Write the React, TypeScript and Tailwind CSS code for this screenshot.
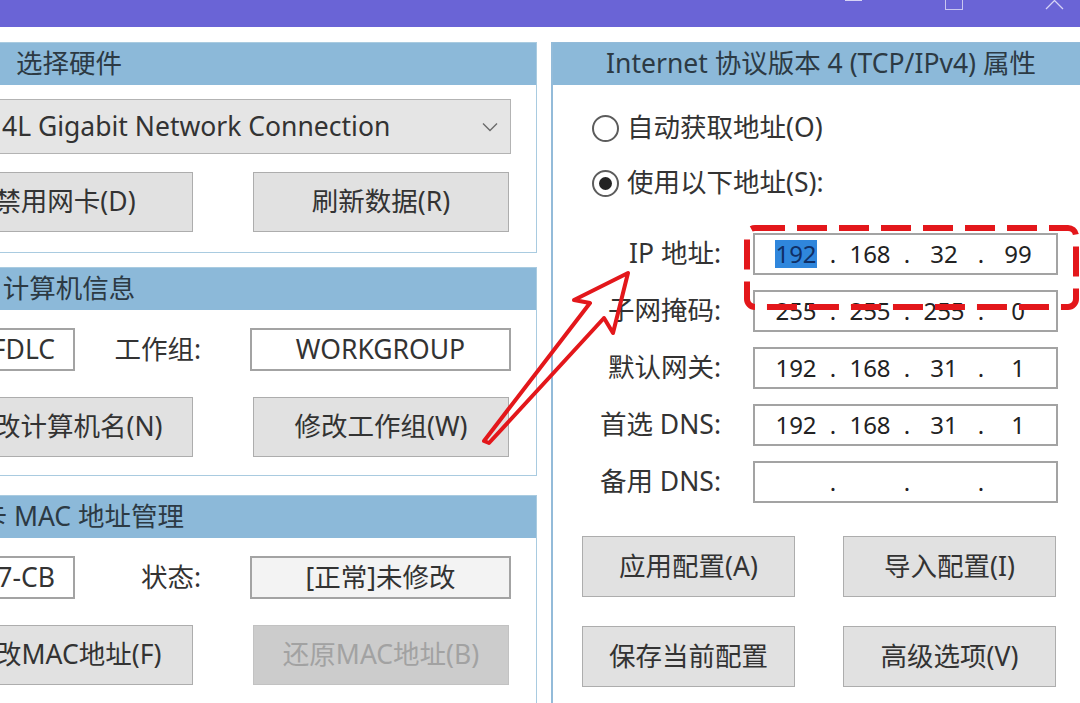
import React from "react";

type BtnProps = { children: React.ReactNode; className?: string; disabled?: boolean };

function Btn({ children, className = "", disabled = false }: BtnProps) {
  return (
    <div
      className={
        "shrink-0 flex items-center justify-center h-[60px] border text-[26.5px] whitespace-nowrap " +
        (disabled
          ? "bg-[#cccccc] border-[#c2c2c2] text-[#a2a2a2] "
          : "bg-[#e1e1e1] border-[#adadad] text-[#333333] ") +
        className
      }
    >
      {children}
    </div>
  );
}

function Header({ children }: { children: React.ReactNode }) {
  return (
    <div className="h-[42px] bg-[#8cb9d9] flex items-center justify-center text-[26.5px] text-[#2c3a44] whitespace-nowrap">
      {children}
    </div>
  );
}

function IpField({ parts, highlight = false }: { parts: string[]; highlight?: boolean }) {
  return (
    <div className="shrink-0 ml-[30px] w-[305px] h-[42px] border-2 border-[#a3a3a3] bg-white flex items-center pl-[12px] text-[24px] text-[#222222]">
      {parts.map((p, i) => (
        <React.Fragment key={i}>
          <div className="w-[58px] flex justify-center">
            {i === 0 && highlight ? (
              <span className="w-[42px] h-[28px] flex items-center justify-center bg-[#2f86dc] text-[#0f2f66]">{p}</span>
            ) : (
              <span>{p}</span>
            )}
          </div>
          {i < 3 && <div className="w-[16px] text-center">.</div>}
        </React.Fragment>
      ))}
    </div>
  );
}

function Radio({ checked, label }: { checked: boolean; label: string }) {
  return (
    <div className="h-[40px] flex items-center pl-[39px] gap-[8px] text-[26.5px] text-[#333333]">
      <div className="w-[27px] h-[27px] rounded-full border-2 border-[#5c5c5c] bg-white flex items-center justify-center">
        {checked && <div className="w-[13px] h-[13px] rounded-full bg-[#222222]" />}
      </div>
      <span>{label}</span>
    </div>
  );
}

function FieldRow({ label, parts, highlight }: { label: string; parts: string[]; highlight?: boolean }) {
  return (
    <div className="flex items-center h-[42px] mb-[15px]">
      <div className="shrink-0 w-[170px] text-right pr-[2px] text-[26.5px] text-[#333333] whitespace-nowrap">{label}</div>
      <IpField parts={parts} highlight={highlight} />
    </div>
  );
}

export default function App() {
  return (
    <div className="relative w-[1080px] h-[703px] overflow-hidden bg-white font-['Noto_Sans','Noto_Sans_CJK_SC',sans-serif]">
      {/* title bar */}
      <div className="h-[27px] bg-[#6a64d6] flex items-start justify-end pr-[16px]">
        <div className="w-[17px] h-[1px] bg-[#d6d3f6]" />
        <div className="ml-[83px] mt-[-8px] w-[18px] h-[18px] border border-[#c9c6f0]" />
        <svg className="ml-[82px] mt-[-9px]" width="19" height="19" viewBox="0 0 19 19">
          <path d="M1 1 L18 18 M18 1 L1 18" stroke="#d6d3f6" strokeWidth="1.3" fill="none" />
        </svg>
      </div>

      <div className="flex items-start mt-[15px] w-[1200px]">
        {/* left column */}
        <div className="shrink-0 ml-[-399px] w-[936px] flex flex-col">
          {/* panel 1 */}
          <div className="border border-[#a9cbe0]">
            <Header>选择硬件</Header>
            <div className="flex flex-col items-end pr-[25px] pt-[14px] pb-[20px]">
              <div className="w-[600px] h-[55px] bg-[#e5e5e5] border border-[#b3b3b3] flex items-center justify-between pl-[90px] pr-[12px] text-[26.5px] text-[#333333] whitespace-nowrap">
                <span>4L Gigabit Network Connection</span>
                <svg width="16" height="10" viewBox="0 0 16 10">
                  <path d="M1 1.5 L8 8.5 L15 1.5" stroke="#6b6b6b" strokeWidth="1.4" fill="none" />
                </svg>
              </div>
              <div className="flex gap-[60px] mt-[18px] mr-[2px]">
                <Btn className="w-[256px]">禁用网卡(D)</Btn>
                <Btn className="w-[256px]">刷新数据(R)</Btn>
              </div>
            </div>
          </div>

          {/* panel 2 */}
          <div className="border border-[#a9cbe0] mt-[14px]">
            <Header>计算机信息</Header>
            <div className="flex flex-col items-end pr-[25px] pt-[18px] pb-[18px]">
              <div className="flex items-center h-[43px] text-[26.5px] text-[#333333] whitespace-nowrap">
                <div className="shrink-0 w-[200px] h-[43px] border-2 border-[#a3a3a3] bg-white flex items-center justify-end pr-[18px]">FDLC</div>
                <div className="shrink-0 w-[175px] text-right pr-[49px]">工作组:</div>
                <div className="shrink-0 w-[261px] h-[43px] border-2 border-[#a3a3a3] bg-white flex items-center justify-center">WORKGROUP</div>
              </div>
              <div className="flex gap-[60px] mt-[26px] mr-[2px]">
                <Btn className="w-[256px]">修改计算机名(N)</Btn>
                <Btn className="w-[256px]">修改工作组(W)</Btn>
              </div>
            </div>
          </div>

          {/* panel 3 */}
          <div className="border border-[#a9cbe0] mt-[19px] h-[260px]">
            <Header>网卡 MAC 地址管理</Header>
            <div className="flex flex-col items-end pr-[25px] pt-[18px]">
              <div className="flex items-center h-[43px] text-[26.5px] text-[#333333] whitespace-nowrap">
                <div className="shrink-0 w-[200px] h-[43px] border-2 border-[#a3a3a3] bg-white flex items-center justify-end pr-[18px]">7-CB</div>
                <div className="shrink-0 w-[175px] text-right pr-[49px]">状态:</div>
                <div className="shrink-0 w-[261px] h-[43px] border-2 border-[#a3a3a3] bg-[#f3f3f3] flex items-center justify-center">[正常]未修改</div>
              </div>
              <div className="flex gap-[60px] mt-[26px] mr-[2px]">
                <Btn className="w-[256px]">修改MAC地址(F)</Btn>
                <Btn className="w-[256px]" disabled>还原MAC地址(B)</Btn>
              </div>
            </div>
          </div>
        </div>

        {/* right column */}
        <div className="shrink-0 ml-[14px] w-[538px] h-[700px] border-l-2 border-t border-[#93bbd9] flex flex-col">
          <Header>Internet 协议版本 4 (TCP/IPv4) 属性</Header>
          <div className="mt-[23px]">
            <Radio checked={false} label="自动获取地址(O)" />
          </div>
          <div className="mt-[15px]">
            <Radio checked={true} label="使用以下地址(S):" />
          </div>
          <div className="mt-[30px] flex flex-col">
            <FieldRow label="IP 地址:" parts={["192", "168", "32", "99"]} highlight />
            <FieldRow label="子网掩码:" parts={["255", "255", "255", "0"]} />
            <FieldRow label="默认网关:" parts={["192", "168", "31", "1"]} />
            <FieldRow label="首选 DNS:" parts={["192", "168", "31", "1"]} />
            <FieldRow label="备用 DNS:" parts={["", "", "", ""]} />
          </div>
          <div className="mt-[18px] flex gap-[48px] pl-[29px]">
            <Btn className="w-[213px] h-[61px]">应用配置(A)</Btn>
            <Btn className="w-[213px] h-[61px]">导入配置(I)</Btn>
          </div>
          <div className="mt-[29px] flex gap-[48px] pl-[29px]">
            <Btn className="w-[213px] h-[61px]">保存当前配置</Btn>
            <Btn className="w-[213px] h-[61px]">高级选项(V)</Btn>
          </div>
        </div>
      </div>

      {/* annotation overlay */}
      <svg className="absolute left-0 top-0 pointer-events-none" width="1080" height="703" viewBox="0 0 1080 703">
        <rect x="747" y="228" width="329" height="79" rx="8" fill="none" stroke="#e3171b" strokeWidth="6" strokeDasharray="30 12" />
        <polygon
          points="484,441 590,303 574,300 628,273 613,333 604,318 489,443"
          fill="none"
          stroke="#e3171b"
          strokeWidth="4"
          strokeLinejoin="round"
        />
      </svg>
    </div>
  );
}
